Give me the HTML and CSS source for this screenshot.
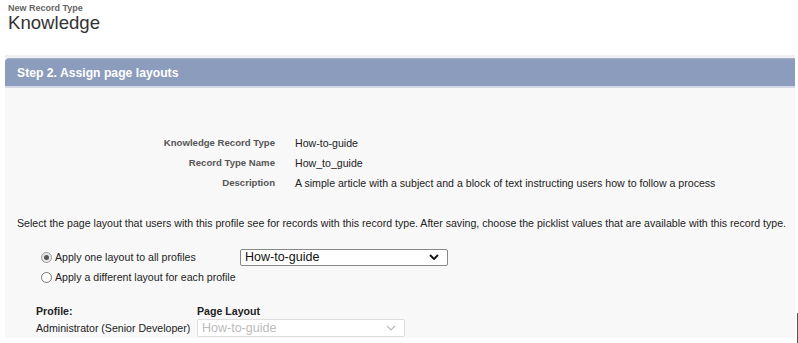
FILE: index.html
```html
<!DOCTYPE html>
<html>
<head>
<meta charset="utf-8">
<link rel="stylesheet" href="styles.css">
</head>
<body>
<div class="page-head">
  <div class="page-type">New Record Type</div>
  <h1 class="page-title">Knowledge</h1>
</div>
<div class="panel">
  <div class="panel-head">Step 2. Assign page layouts</div>
  <div class="panel-body">
    <div class="fields">
      <div class="f-label">Knowledge Record Type</div><div class="f-value">How-to-guide</div>
      <div class="f-label">Record Type Name</div><div class="f-value">How_to_guide</div>
      <div class="f-label">Description</div><div class="f-value">A simple article with a subject and a block of text instructing users how to follow a process</div>
    </div>
    <p class="instr">Select the page layout that users with this profile see for records with this record type. After saving, choose the picklist values that are available with this record type.</p>
    <div class="opt-row">
      <label class="radio-label"><span class="radio checked"></span>Apply one layout to all profiles</label>
      <div class="select">How-to-guide<svg class="chev" viewBox="0 0 10 6" width="10" height="6"><path d="M1 1 L5 5 L9 1" fill="none" stroke="#111" stroke-width="1.8"/></svg></div>
    </div>
    <div class="opt-row second">
      <label class="radio-label"><span class="radio"></span>Apply a different layout for each profile</label>
    </div>
    <div class="profiles">
      <div class="p-head">Profile:</div><div class="p-head">Page Layout</div>
      <div class="p-name">Administrator (Senior Developer)</div>
      <div class="select disabled">How-to-guide<svg class="chev" viewBox="0 0 10 6" width="10" height="6"><path d="M1 1 L5 5 L9 1" fill="none" stroke="#bbb" stroke-width="1.2"/></svg></div>
    </div>
  </div>
</div>
<div class="edge-line"></div>
</body>
</html>
```
FILE: styles.css
```css
html, body { margin: 0; padding: 0; background: #fff; }
body {
  font-family: "Liberation Sans", Arial, sans-serif;
  color: #333;
  width: 798px;
  height: 343px;
  overflow: hidden;
  position: relative;
}
.page-head { padding: 3px 0 0 8px; height: 55px; box-sizing: border-box; }
.page-type { font-size: 9px; font-weight: bold; color: #666; line-height: 10px; }
.page-title { margin: 0; font-size: 18.6px; font-weight: normal; color: #333; line-height: 20px; }

.panel {
  margin-left: 5px;
  width: 790px;
  border-top: 3px solid #eef0f4;
}
.panel-head {
  background: #8c9cbc;
  color: #fff;
  font-weight: bold;
  font-size: 12.2px;
  height: 30px;
  line-height: 29px;
  padding-left: 12px;
  border-top-left-radius: 4px;
  border-top: 1px solid #a5b1c9;
  border-bottom: 2px solid #d5dae6;
  box-sizing: border-box;
}
.panel-body {
  background: #f8f8f8;
  height: 250px;
  padding-top: 49px;
  box-sizing: border-box;
}
.fields {
  display: grid;
  grid-template-columns: 270px 1fr;
  column-gap: 20px;
  row-gap: 8px;
  align-items: center;
}
.f-label { text-align: right; font-size: 9.6px; font-weight: bold; color: #555; line-height: 12px; }
.f-value { font-size: 10.6px; color: #222; line-height: 12px; }
.instr { margin: 28px 0 0 12px; font-size: 10.6px; color: #222; line-height: 12px; white-space: nowrap; }
.opt-row { display: flex; align-items: center; margin-top: 18px; padding-left: 36px; height: 20px; }
.opt-row.second { margin-top: 0; }
.radio-label { display: flex; align-items: center; width: 199px; font-size: 10.6px; color: #222; }
.radio {
  width: 11px; height: 11px; border-radius: 50%;
  border: 1px solid #777; background: #fff;
  margin-right: 3px; box-sizing: border-box; flex: none;
  display: inline-flex; align-items: center; justify-content: center;
}
.radio.checked { border-color: #999; background: #e8e8e8; }
.radio.checked::after { content: ""; width: 5px; height: 5px; border-radius: 50%; background: #555; }
.select {
  width: 208px; height: 17px; box-sizing: border-box;
  border: 1px solid #888; border-radius: 2px; background: #fff;
  font-size: 12.5px; color: #111; padding: 0 8px 0 4px;
  display: flex; align-items: center; justify-content: space-between;
}
.select.disabled { border-color: #ddd; color: #bbb; height: 18px; }
.profiles {
  display: grid;
  grid-template-columns: 161px 1fr;
  align-items: center;
  margin: 17px 0 0 31px;
  row-gap: 1px;
}
.p-head { font-size: 10.6px; font-weight: bold; color: #222; line-height: 14px; }
.p-name { font-size: 10.6px; color: #222; }
.edge-line {
  position: absolute; right: 0; top: 313px;
  width: 1px; height: 30px; background: #555;
}
```
